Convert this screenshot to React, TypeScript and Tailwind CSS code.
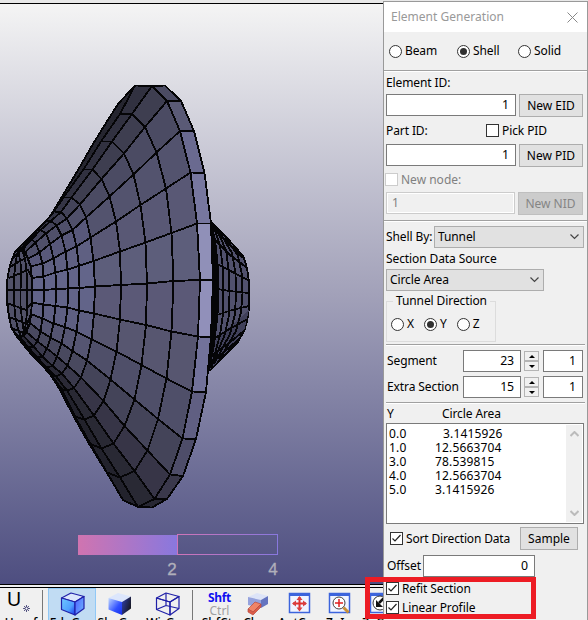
import React from "react";

type Pt = [number, number];

const RINGS: Pt[][] = [
  [[135, 85.5], [152, 86], [167, 101], [180, 131], [190.5, 172.5], [197, 223.5], [200, 280], [198, 336.5], [192, 391.5], [182.5, 438.5], [170, 474.5], [154.5, 499], [138, 507], [123, 500]],
  [[120, 114], [132, 114], [145, 127], [156.5, 152.5], [166, 188.5], [171.5, 233], [173.5, 281], [171.5, 331.5], [166.5, 378.5], [158, 419], [147.5, 450.5], [134.5, 471], [120, 477.5], [107, 472.5]],
  [[101, 141.5], [112, 141.5], [124, 153.5], [133.5, 174.5], [140.5, 205], [145.5, 242.5], [147, 283.5], [146, 325], [141.5, 365], [134.5, 399.5], [124.5, 426], [113.5, 443.5], [101.5, 448.5], [90.5, 444]],
  [[83.5, 169.5], [92.5, 169.5], [101.5, 179], [109.5, 196.5], [116, 221.5], [120, 251.5], [121, 285], [120, 319.5], [116.5, 351.5], [110.5, 379.5], [103.5, 401], [94, 415.5], [84.5, 419.5], [75, 416.5]],
  [[63.5, 197.5], [71.5, 197.5], [80, 204.5], [86, 217.5], [90.5, 237.5], [93.5, 261], [95, 286.5], [94, 313.5], [91.5, 339.5], [87, 360.5], [81, 377.5], [74, 388], [67, 390.5], [61.5, 389]],
  [[54, 211.5], [61, 212], [67, 218.5], [72.5, 230], [76.5, 246.5], [79, 266], [79.5, 288], [79, 310.5], [76.5, 331.5], [72.5, 351], [67.5, 365.5], [62, 373.5], [56, 376.5], [51.5, 375]],
  [[46, 221], [51, 221], [56.5, 225.5], [61.5, 235.5], [65.5, 251.5], [67.5, 269.5], [68, 288.5], [67.5, 307.5], [65, 327], [61.5, 343.5], [57, 356.5], [52.5, 366], [46.5, 367.5], [43.5, 365.5]],
  [[37.5, 230], [40.5, 230], [46, 233.5], [50, 244], [53.5, 258.5], [55.5, 272.5], [56, 289], [55.5, 306], [53.5, 323.5], [50.5, 337.5], [47, 348.5], [42.5, 356.5], [37.5, 357.5], [34.5, 355.5]],
  [[29.5, 239.5], [31.5, 239.5], [35.5, 242.5], [39.5, 252.5], [42.5, 263.5], [43.5, 276.5], [44, 290], [43.5, 304.5], [42.5, 318.5], [40.5, 331.5], [37.5, 341.5], [33.5, 346.5], [28.5, 347.5], [26, 346]],
  [[21, 248.5], [23, 249], [25.5, 252], [28, 258.5], [30.5, 266.5], [32, 278], [32.5, 290], [32, 302.5], [31, 314], [30, 323], [26.5, 332], [23.5, 336], [19.5, 336.5], [17, 335]],
];

const BACK: Pt[] = [[165, 85.5], [181, 101], [194, 131], [204.5, 173], [211, 223.5], [213, 280], [211, 337], [206, 392], [196, 439], [183, 476], [167, 499], [152, 507.5]];

const OUTLINE: Pt[] = [[165, 85.5], [135, 85.5], [118, 104], [106, 123], [93, 144], [78, 170], [63, 195], [50, 216.5], [37, 230], [25, 241.5], [15, 252], [10, 265], [7.5, 278], [7, 290], [7.5, 303], [9, 317], [11.5, 328], [17, 337], [31, 354], [43, 366], [52, 377], [60, 390], [74, 417], [88, 442], [107, 473], [123, 500], [138, 507], [152, 507.5]];

const FILLS: string[] = ["#313140", "#3e3e50", "#4b4b63", "#53536e", "#595875", "#5d5e7b", "#5b5977", "#575670", "#4f4f69", "#444459", "#373547", "#292934", "#22222c"];
const LEFT_FILLS: string[] = ["#343445", "#434359", "#50506a", "#58587a", "#5f6082", "#63658a", "#626489", "#5e5f82", "#555572", "#49495f", "#3a394c", "#2a2936", "#202029"];
const BAND: string[] = ["#4b4b63", "#5a5a76", "#6a6a90", "#77779f", "#9090b8", "#9190ba", "#72729a", "#605f82", "#4e4d69", "#3a384b", "#272733"];

const CAP: Pt[][] = [
  [[20, 249], [24, 254], [26, 265], [27, 278], [27, 290], [27, 305], [26.5, 318], [25, 329], [22, 336]],
  [[18, 250], [20.5, 262], [21, 278], [20.5, 290], [20.5, 305], [22, 320], [24, 333]],
  [[18, 251], [15.5, 262], [14, 278], [14, 290], [14, 303], [15.5, 318], [18, 329], [21, 336]],
];
const CAP_LINES: Pt[][] = [
  [[32.5, 290], [7, 290]],
  [[32, 302.5], [26, 310], [7, 303]],
  [[32, 278], [28, 270], [9, 278]],
  [[31, 314], [27, 324], [9, 317]],
  [[30.5, 266.5], [27, 257], [10, 267]],
  [[30, 323], [24, 333], [11.5, 328]],
  [[28, 258.5], [22, 249], [12, 259]],
];

const KNOB: Pt[] = [[211, 222], [228, 239], [243.5, 256.5], [247, 268], [249, 281.5], [249, 308], [247, 321.5], [244.5, 330], [238, 342], [210, 370]];
const KNOB_LINES: Pt[][] = [
  [[213, 225], [220, 245], [223, 269], [223, 292], [223, 314], [220, 335], [211, 368]],
  [[215, 226], [226, 250], [229, 272], [229.5, 293], [229, 315], [225, 334], [211, 368]],
  [[219, 231], [232, 253], [235.5, 273], [236, 293], [235, 314], [230, 334], [214, 364]],
  [[224, 235], [238, 256], [242, 275], [242.5, 293], [241, 312], [236, 331], [220, 359]],
  [[218, 289], [229, 291], [249, 293]],
  [[217, 264], [248, 280]],
  [[215, 240], [230, 255], [246, 267]],
  [[213, 228], [243, 258]],
  [[217, 315], [232, 310], [249, 306]],
  [[215, 338], [231, 328], [248, 319]],
  [[213, 354], [229, 343], [245, 330]],
  [[211, 364], [240, 338]],
];

const str = (p: Pt[]) => p.map((q) => q.join(",")).join(" ");

function Mesh() {
  return (
    <svg className="block" width="384" height="580" viewBox="0 4 384 580" shapeRendering="crispEdges">
      <g stroke="#050507" strokeWidth="1.85" strokeLinejoin="round">
        <polygon points={str(KNOB)} fill="#51516d" />
        <polygon points="215,340 249,310 244,331 210,370" fill="#40405a" stroke="none" />
        {KNOB_LINES.map((l, i) => <polyline key={i} points={str(l)} fill="none" />)}
        <polygon points="211,222 215,240 217.5,262 218.5,291 217.5,315 214,345 209,370 211,337 213,280" fill="#050507" />
        <polygon points={str(OUTLINE)} fill="#25252f" />
        {RINGS.slice(0, -1).map((ring, r) =>
          FILLS.map((_, k) => (
            <polygon
              key={r + "-" + k}
              points={str([ring[k], ring[k + 1], RINGS[r + 1][k + 1], RINGS[r + 1][k]])}
              fill={(r > 3 ? LEFT_FILLS : FILLS)[k]}
            />
          )),
        )}
        {BAND.map((c, k) => (
          <polygon key={k} points={str([RINGS[0][k + 1], RINGS[0][k + 2], BACK[k + 1], BACK[k]])} fill={c} />
        ))}
        <polygon points={str([...RINGS[9], [11.5, 328], [9, 317], [7, 303], [7, 290], [7.5, 278], [10, 265], [15, 252]])} fill="#515168" />
        {[...CAP, ...CAP_LINES].map((l, i) => <polyline key={i} points={str(l)} fill="none" />)}
        <polyline points={str(OUTLINE)} fill="none" />
      </g>
      <defs>
        <linearGradient id="scale" gradientUnits="userSpaceOnUse" x1="78" y1="0" x2="178" y2="0">
          <stop stopColor="#d074b0" /><stop offset="1" stopColor="#8878de" />
        </linearGradient>
        <linearGradient id="scaleBox" gradientUnits="userSpaceOnUse" x1="178" y1="0" x2="278" y2="0">
          <stop stopColor="#d074b8" /><stop offset="1" stopColor="#8878de" />
        </linearGradient>
      </defs>
      <rect x="78" y="535" width="100" height="20" fill="url(#scale)" />
      <rect x="177.5" y="534.5" width="100" height="20" fill="none" stroke="url(#scaleBox)" />
      <g fill="#b0afba" stroke="#b0afba" strokeWidth=".3" fontFamily="Liberation Sans, sans-serif" fontSize="17" textAnchor="middle">
        <text x="172" y="575">2</text>
        <text x="273" y="575">4</text>
      </g>
    </svg>
  );
}

function Cube({ kind }: { kind: "edge" | "shade" | "wire" }) {
  const s = kind === "shade" ? "none" : "#2020a8";
  const id = "front-" + kind;
  return (
    <svg className="ml-px block" width="26" height="24" viewBox="0 0 26 24" strokeLinejoin="round">
      <defs>
        <linearGradient id={id} x2="1" y2="1"><stop stopColor={kind === "edge" ? "#70c8ff" : "#c0d8ff"} /><stop offset=".6" stopColor={kind === "edge" ? "#50a0ff" : "#3050ff"} /><stop offset="1" stopColor="#1830e8" /></linearGradient>
        <linearGradient id={id + "s"} x2="1" y2="0.6"><stop stopColor={kind === "edge" ? "#5060ff" : "#3040b0"} /><stop offset="1" stopColor={kind === "edge" ? "#68a8ff" : "#181820"} /></linearGradient>
      </defs>
      <path d="M1.500 6 11 1l13 3.500-9 5.500z" fill={kind === "wire" ? "none" : "#dce6fc"} stroke={s} strokeWidth="1.200" />
      <path d="M1.500 6 15 10v13L1.500 17.500z" fill={kind === "wire" ? "none" : `url(#${id})`} stroke={s} strokeWidth="1.200" />
      <path d="M15 10l9-5.500v12L15 23z" fill={kind === "wire" ? "none" : `url(#${id}s)`} stroke={s} strokeWidth="1.200" />
      {kind === "wire" && <path d="M11 1v12.500L1.500 17.500M11 13.500l13 3" fill="none" stroke={s} strokeWidth="1.200" />}
    </svg>
  );
}

function ViewFrame({ children }: { children: React.ReactNode }) {
  return (
    <svg className="ml-px block" width="24" height="24" viewBox="0 0 24 24">
      <rect x="1.500" y="1.500" width="20" height="19" fill="#f0f4ff" stroke="#3c64dc" strokeWidth="1.500" />
      <path d="M1 2.500h21" stroke="#3c64dc" strokeWidth="3" />
      {children}
    </svg>
  );
}

function Tool({ w, label, children, active = false }: { w: string; label: string; children: React.ReactNode; active?: boolean }) {
  return (
    <div className={`${w} flex h-11 shrink-0 flex-col items-center border pt-[3px] ${active ? "border-[#90c8f6] bg-[#c1dcf3]" : "border-transparent"}`}>
      <div className="h-[24px] shrink-0">{children}</div>
      <div className="whitespace-nowrap text-[12px] leading-[14px] font-medium">{label}</div>
    </div>
  );
}

function Toolbar() {
  return (
    <div className="flex h-[33px] overflow-hidden bg-[#f0f0f0] text-black">
      <Tool w="w-[42px]" label="Unref">
        <div className="-mt-[3px] flex text-[20px] leading-[20px]">
          <span className="-ml-[4px]">U</span>
          <svg className="mt-[15px] ml-[1px]" width="9" height="9" viewBox="0 0 9 9"><path d="M4.500 1v7M1 4.500h7M2 2l5 5M7 2l-5 5" stroke="#35356c" strokeWidth=".8" /><circle cx="4.500" cy="4.500" r="1.500" fill="#fff" stroke="#35356c" strokeWidth=".8" /></svg>
        </div>
      </Tool>
      <div className="mt-[2px] h-10 w-px bg-[#777]" />
      <div className="w-[5px]" />
      <Tool w="w-[48px]" label="EdgGeo" active><Cube kind="edge" /></Tool>
      <Tool w="w-[47px]" label="ShaGeo"><Cube kind="shade" /></Tool>
      <Tool w="w-[49px]" label="WirGeo"><Cube kind="wire" /></Tool>
      <div className="mt-[2px] h-10 w-px bg-[#777]" />
      <Tool w="w-[53px]" label="ShfCtr">
        <div className="-mt-px text-center text-[12px] leading-[13px]">
          <div className="font-bold tracking-[-0.3px] text-[#1010f0]">Shft</div>
          <div className="text-[#a0a0a0]">Ctrl</div>
        </div>
      </Tool>
      <Tool w="w-[24px]" label="Clear">
        <svg className="block" width="24" height="24" viewBox="0 0 24 24">
          <path d="M2 5 11 1l11 3-7 4z" fill="#dde4f8" /><path d="M2 5l13 3v8L2 13z" fill="#95a2dd" /><path d="M15 8l7-4v8l-7 4z" fill="#6474c0" />
          <path d="M2 17l7-7 6 2-8 8z" fill="#f08468" stroke="#b84c40" strokeWidth=".7" /><path d="M2 17v3l5 3 8-8v-3l-8 8z" fill="#dc5c48" stroke="#b84c40" strokeWidth=".7" />
        </svg>
      </Tool>
      <div className="w-[9px]" />
      <Tool w="w-[40px]" label="AutCen">
        <ViewFrame><path d="M11.500 5v13M5 11.500h13" stroke="#e03030" strokeWidth="2" /><path d="M8.500 8l3-4 3 4zM8.500 15.500l3 4 3-4zM8 8.500l-4 3 4 3zM15 8.500l4 3-4 3z" fill="#d84040" /></ViewFrame>
      </Tool>
      <Tool w="w-[40px]" label="ZoIn">
        <ViewFrame><circle cx="11" cy="11" r="6" fill="#fff" stroke="#444" /><path d="M11 7v8M7 11h8" stroke="#e02020" strokeWidth="1.500" /><path d="M15.500 15.500l5 5" stroke="#c89038" strokeWidth="3" /></ViewFrame>
      </Tool>
      <Tool w="w-[42px]" label="ZoOut">
        <ViewFrame><circle cx="11" cy="11" r="7" fill="#fff" stroke="#333" /><path d="M15 6l-5 5" stroke="#111" strokeWidth="2.500" /><path d="M7 8v7h7z" fill="#111" /></ViewFrame>
      </Tool>
    </div>
  );
}

function Radio({ label, on = false }: { label: string; on?: boolean }) {
  return (
    <div className="flex items-center gap-[3px]">
      <span className="flex size-[13px] items-center justify-center rounded-full border border-[#333] bg-white">
        {on && <span className="size-[7px] rounded-full bg-[#303030]" />}
      </span>
      <span>{label}</span>
    </div>
  );
}

function Check({ label, on = false, off = false }: { label: string; on?: boolean; off?: boolean }) {
  return (
    <div className={`flex items-center gap-[3px] ${off ? "text-[#808080]" : ""}`}>
      <span className={`flex size-[13px] shrink-0 items-center justify-center border bg-white ${off ? "border-[#ccc]" : "border-[#333]"}`}>
        {on && <svg width="11" height="11" viewBox="0 0 11 11"><path d="M1.500 5.500l2.500 2.500 5.500-6" fill="none" stroke="#222" strokeWidth="1.200" /></svg>}
      </span>
      <span>{label}</span>
    </div>
  );
}

function Field({ w, value }: { w: string; value: string }) {
  return <div className={`${w} flex h-[22px] items-center justify-end border border-[#7a7a7a] bg-white pr-[6px] text-[12.3px]`}>{value}</div>;
}

function Button({ w, label, off = false }: { w: string; label: string; off?: boolean }) {
  return (
    <div className={`${w} flex h-[23px] items-center justify-center border tracking-normal ${off ? "border-[#bfbfbf] bg-[#ccc] text-[#858585]" : "border-[#adadad] bg-[#e1e1e1]"}`}>{label}</div>
  );
}

function Select({ w, label }: { w: string; label: string }) {
  return (
    <div className={`${w} flex h-[22px] items-center justify-between border border-[#adadad] bg-[#e1e1e1] pr-1 pl-[3px]`}>
      <span>{label}</span>
      <svg width="9" height="6" viewBox="0 0 9 6"><path d="M.5.5l4 4 4-4" fill="none" stroke="#444" strokeWidth="1.200" /></svg>
    </div>
  );
}

function Spinner() {
  return (
    <div className="flex h-[20px] w-[15px] flex-col">
      {["M0 3h6L3 0z", "M0 0h6L3 3z"].map((d) => (
        <div key={d} className="flex flex-1 items-center justify-center border border-[#b4b4b4] bg-[#f0f0f0]">
          <svg width="6" height="3" viewBox="0 0 6 3"><path d={d} /></svg>
        </div>
      ))}
    </div>
  );
}

function Rule() {
  return <div className="h-[2px] w-full shrink-0 border-t border-b border-t-[#a0a0a0] border-b-white" />;
}

const ROWS: [string, string, string][] = [
  ["0.0", "3.1415926", "pl-[8px]"],
  ["1.0", "12.5663704", ""],
  ["3.0", "78.539815", ""],
  ["4.0", "12.5663704", ""],
  ["5.0", "3.1415926", ""],
];

function Dialog() {
  return (
    <div className="absolute top-px left-[383px] flex h-[619px] w-[205px] flex-col border border-b-0 border-[#999] bg-[#f0f0f0] text-[12px] leading-4 tracking-[-0.1px] whitespace-nowrap text-black">
      <div className="flex h-[30px] shrink-0 items-center justify-between bg-white pr-[9px] pl-[7px] tracking-[0.02px] text-[#999]">
        <span>Element Generation</span>
        <svg width="11" height="11" viewBox="0 0 11 11"><path d="M.5.5l10 10M10.500.5l-10 10" stroke="#888" /></svg>
      </div>
      <div className="flex h-[38px] shrink-0 items-center pl-[5px]">
        <div className="w-[68px]"><Radio label="Beam" /></div>
        <div className="w-[61px]"><Radio label="Shell" on /></div>
        <Radio label="Solid" />
      </div>
      <Rule />
      <div className="flex h-[22px] shrink-0 items-center pl-[2px]">Element ID:</div>
      <div className="flex h-[23px] shrink-0 gap-[3px] pl-[2px]"><Field w="w-[130px]" value="1" /><Button w="w-[64px]" label="New EID" /></div>
      <div className="flex h-[27px] shrink-0 items-center pl-[2px]"><span className="w-[100px]">Part ID:</span><Check label="Pick PID" /></div>
      <div className="flex h-[23px] shrink-0 gap-[3px] pl-[2px]"><Field w="w-[130px]" value="1" /><Button w="w-[64px]" label="New PID" /></div>
      <div className="flex h-[25px] shrink-0 items-center pl-px tracking-normal"><Check label="New node:" off /></div>
      <div className="flex h-[23px] shrink-0 gap-[3px] pl-[2px] text-[#808080]">
        <div className="flex h-[22px] w-[129px] items-center border border-[#ccc] pl-[5px] ring-1 ring-white ring-inset">1</div>
        <Button w="w-[65px]" label="New NID" off />
      </div>
      <div className="h-[5px] shrink-0" />
      <Rule />
      <div className="mt-[4px] flex h-[22px] shrink-0 items-center pl-[2px]"><span className="w-[48px]">Shell By:</span><Select w="w-[150px]" label="Tunnel" /></div>
      <div className="flex h-[21px] shrink-0 items-center pl-[2px]">Section Data Source</div>
      <div className="shrink-0 pl-[2px]"><Select w="w-[158px]" label="Circle Area" /></div>
      <fieldset className="mt-[2px] ml-[2px] h-[49px] w-[110px] shrink-0 border border-[#dcdcdc]">
        <legend className="ml-[6px] px-[3px]">Tunnel Direction</legend>
        <div className="flex h-[30px] items-center gap-[10px] pl-[4px]"><Radio label="X" /><Radio label="Y" on /><Radio label="Z" /></div>
      </fieldset>
      <div className="mt-[2px] px-[2px]"><Rule /></div>
      <div className="mt-[4px] flex h-[22px] shrink-0 items-center pl-[3px]"><span className="w-[76px]">Segment</span><Field w="w-[58px]" value="23" /><div className="mr-[4px] ml-[3px]"><Spinner /></div><Field w="w-[40px]" value="1" /></div>
      <div className="mt-[4px] flex h-[22px] shrink-0 items-center pl-[3px]"><span className="w-[76px]">Extra Section</span><Field w="w-[58px]" value="15" /><div className="mr-[4px] ml-[3px]"><Spinner /></div><Field w="w-[40px]" value="1" /></div>
      <div className="mt-[4px] px-[2px]"><Rule /></div>
      <div className="flex h-[19px] shrink-0 items-center pl-[3px]"><span className="w-[55px]">Y</span><span>Circle Area</span></div>
      <div className="ml-[2px] flex h-[101px] w-[198px] shrink-0 justify-between border border-[#7a7a7a] bg-white">
        <div className="pt-[3px] pl-[2px] leading-[14px] tracking-[0.15px]">
          {ROWS.map(([y, a, pad]) => (
            <div key={y} className="flex"><span className="w-[46px]">{y}</span><span className={pad}>{a}</span></div>
          ))}
        </div>
        <div className="m-px flex w-[16px] flex-col items-center justify-between bg-[#f0f0f0] py-[6px]">
          <svg width="9" height="6" viewBox="0 0 9 6"><path d="M.5 5l4-4 4 4" fill="none" stroke="#bbb" strokeWidth="2" /></svg>
          <svg width="9" height="6" viewBox="0 0 9 6"><path d="M.5 1l4 4 4-4" fill="none" stroke="#bbb" strokeWidth="2" /></svg>
        </div>
      </div>
      <div className="mt-[3px] flex h-[23px] shrink-0 items-center pl-[6px]"><div className="w-[130px] tracking-[-0.16px]"><Check label="Sort Direction Data" on /></div><Button w="w-[58px]" label="Sample" /></div>
      <div className="mt-[5px] flex h-[22px] shrink-0 items-center pl-[3px]"><span className="w-[36px]">Offset</span><Field w="w-[112px]" value="0" /></div>
      <div className="mt-[2px] flex h-[19px] shrink-0 items-center pl-[2px]"><Check label="Refit Section" on /></div>
      <div className="flex h-[19px] shrink-0 items-center pl-[2px]"><Check label="Linear Profile" on /></div>
    </div>
  );
}

export default function App() {
  return (
    <div className="relative flex h-[620px] w-[588px] flex-col overflow-hidden bg-[#f0f0f0] font-['Noto_Sans',sans-serif]">
      <div className="h-[4px] shrink-0 border-b border-black bg-[#e8e8e8]" />
      <div className="h-[580px] shrink-0 bg-linear-to-b from-[#f4f4f4] via-[#a2a1b9] to-[#4e4e80]"><Mesh /></div>
      <div className="h-[4px] shrink-0 border-y border-black bg-[#f0f0f0]" />
      <Toolbar />
      <Dialog />
      <div className="absolute top-[577px] left-[365px] h-[42px] w-[171px] border-[5px] border-[#ed1c24]" />
    </div>
  );
}
